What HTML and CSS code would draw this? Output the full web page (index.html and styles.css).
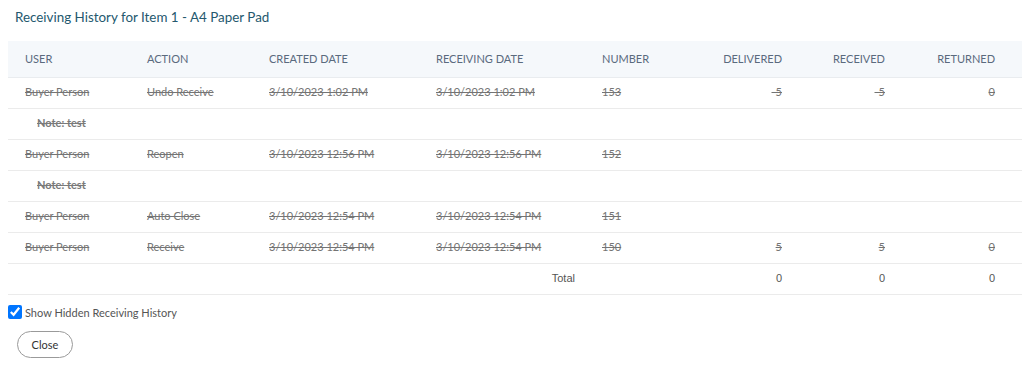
FILE: index.html
```html
<!DOCTYPE html>
<html lang="en">
<head>
    <meta charset="UTF-8">
    <title>Receiving History</title>
    <link rel="stylesheet" href="styles.css">
</head>
<body>
    <h2 class="modal-title">Receiving History for Item 1 - A4 Paper Pad</h2>

    <table class="history">
        <colgroup>
            <col style="width:122px">
            <col style="width:122px">
            <col style="width:167px">
            <col style="width:166px">
            <col style="width:107px">
            <col style="width:107px">
            <col style="width:103px">
            <col style="width:120px">
        </colgroup>
        <thead>
            <tr>
                <th>USER</th>
                <th>ACTION</th>
                <th>CREATED DATE</th>
                <th>RECEIVING DATE</th>
                <th>NUMBER</th>
                <th class="num">DELIVERED</th>
                <th class="num">RECEIVED</th>
                <th class="num last">RETURNED</th>
            </tr>
        </thead>
        <tbody>
            <tr class="hidden-row">
                <td>Buyer Person</td>
                <td>Undo Receive</td>
                <td>3/10/2023 1:02 PM</td>
                <td>3/10/2023 1:02 PM</td>
                <td>153</td>
                <td class="num">-5</td>
                <td class="num">-5</td>
                <td class="num last">0</td>
            </tr>
            <tr class="hidden-row note">
                <td colspan="8">Note: test</td>
            </tr>
            <tr class="hidden-row">
                <td>Buyer Person</td>
                <td>Reopen</td>
                <td>3/10/2023 12:56 PM</td>
                <td>3/10/2023 12:56 PM</td>
                <td>152</td>
                <td class="num"></td>
                <td class="num"></td>
                <td class="num last"></td>
            </tr>
            <tr class="hidden-row note">
                <td colspan="8">Note: test</td>
            </tr>
            <tr class="hidden-row">
                <td>Buyer Person</td>
                <td>Auto Close</td>
                <td>3/10/2023 12:54 PM</td>
                <td>3/10/2023 12:54 PM</td>
                <td>151</td>
                <td class="num"></td>
                <td class="num"></td>
                <td class="num last"></td>
            </tr>
            <tr class="hidden-row">
                <td>Buyer Person</td>
                <td>Receive</td>
                <td>3/10/2023 12:54 PM</td>
                <td>3/10/2023 12:54 PM</td>
                <td>150</td>
                <td class="num">5</td>
                <td class="num">5</td>
                <td class="num last">0</td>
            </tr>
            <tr class="total-row">
                <td></td>
                <td></td>
                <td></td>
                <td class="total-label">Total</td>
                <td></td>
                <td class="num">0</td>
                <td class="num">0</td>
                <td class="num last">0</td>
            </tr>
        </tbody>
    </table>

    <label class="show-hidden">
        <input type="checkbox" checked>
        <span>Show Hidden Receiving History</span>
    </label>

    <div class="footer">
        <button class="btn-close">Close</button>
    </div>
</body>
</html>
```

FILE: styles.css
```css
body {
    margin: 0;
    padding: 0;
    font-family: Lato, "Open Sans", sans-serif;
    background-color: #ffffff;
    color: #555555;
    width: 1022px;
    overflow: hidden;
}
.modal-title {
    margin: 0;
    padding: 9px 15px 0 15px;
    height: 32px;
    line-height: 16px;
    box-sizing: border-box;
    font-size: 13.4px;
    font-weight: normal;
    color: #24586e;
}
.history {
    margin-left: 8px;
    margin-top: 9px;
    width: 1014px;
    border-collapse: collapse;
    table-layout: fixed;
    font-size: 11px;
    line-height: 14px;
}
.history th {
    background-color: #f5f8fb;
    color: #5a6a7e;
    font-weight: normal;
    text-align: left;
    height: 36px;
    padding: 0 0 0 17px;
    border-bottom: 1px solid #e9ecef;
}
.history th.num {
    text-align: right;
    padding: 0 17px 0 0;
}
.history td {
    height: 27px;
    padding: 0 0 3px 17px;
    border-bottom: 1px solid #ebebeb;
    color: #747474;
    white-space: nowrap;
}
.history td.num {
    text-align: right;
    padding: 0 17px 3px 0;
}
.history .num.last {
    padding-right: 27px;
}
.hidden-row td {
    text-decoration: line-through;
}
.history .note td {
    padding-left: 29px;
    font-weight: bold;
    color: #7a7a7a;
}
.history .total-row td {
    font-family: "Liberation Sans", Arial, sans-serif;
    color: #555555;
    text-decoration: none;
}
.history .total-row .total-label {
    text-align: right;
    padding-right: 10px;
}
.show-hidden {
    display: flex;
    align-items: center;
    gap: 3px;
    margin: 10px 0 0 8px;
    font-size: 11px;
    color: #555555;
}
.show-hidden input {
    margin: 0;
    width: 14px;
    height: 14px;
}
.footer {
    padding: 12px 0 0 17px;
}
.btn-close {
    font-family: Lato, "Open Sans", sans-serif;
    font-size: 11px;
    color: #333333;
    background-color: #ffffff;
    border: 1px solid #9a9a9a;
    border-radius: 14px;
    width: 56px;
    height: 27px;
    padding: 0;
    cursor: pointer;
}
```
